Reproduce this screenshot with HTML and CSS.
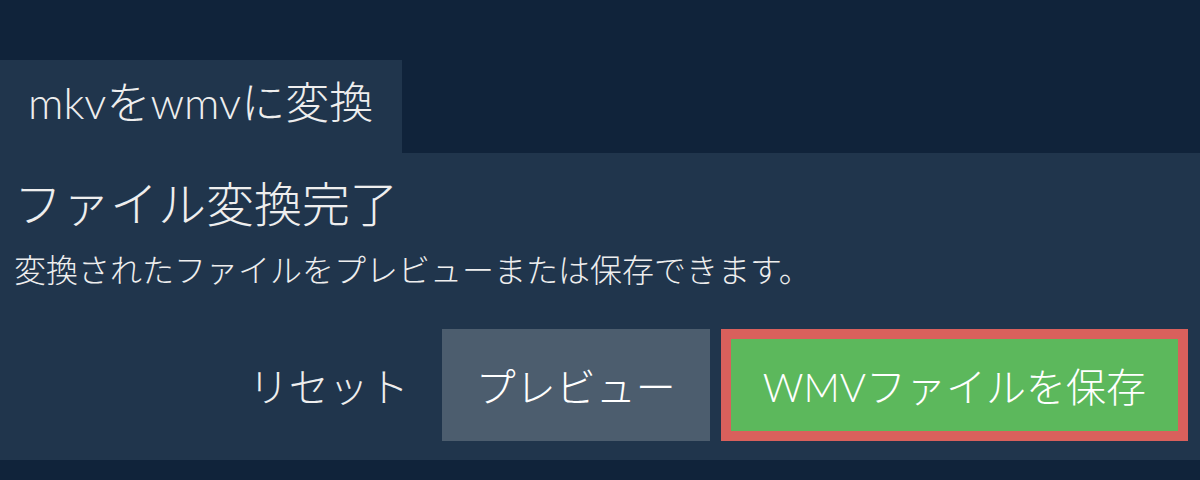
FILE: index.html
```html
<!DOCTYPE html>
<html lang="ja">
<head>
    <meta charset="UTF-8">
    <meta name="viewport" content="width=device-width, initial-scale=1.0">
    <title>mkvをwmvに変換</title>
    <link rel="stylesheet" href="styles.css">
</head>
<body>
    <div class="tabs">
        <div class="tab">mkvをwmvに変換</div>
    </div>
    <div class="panel">
        <h1>ファイル変換完了</h1>
        <p class="desc">変換されたファイルをプレビューまたは保存できます。</p>
        <div class="actions">
            <button class="btn btn-reset">リセット</button>
            <button class="btn btn-preview">プレビュー</button>
            <button class="btn btn-save">WMVファイルを保存</button>
        </div>
    </div>
</body>
</html>
```

FILE: styles.css
```css
body {
    font-family: "Lato", "Noto Sans CJK JP", sans-serif;
    font-weight: 300;
    background-color: #10233a;
    color: #eeeeee;
    margin: 0;
    padding: 60px 0 0;
}

.tabs {
    display: flex;
}

.tab {
    width: 402px;
    height: 93px;
    box-sizing: border-box;
    padding: 0 28px 14px;
    display: flex;
    align-items: center;
    font-size: 44px;
    background-color: #20354c;
}

.panel {
    background-color: #20354c;
    padding: 18px 12px 19px 14px;
}

.panel h1 {
    font-size: 48px;
    font-weight: 300;
    margin: 0;
    line-height: 66px;
}

.desc {
    font-size: 32px;
    margin: 10px 0 0;
    line-height: 46px;
}

.actions {
    display: flex;
    justify-content: flex-end;
    gap: 11px;
    margin-top: 36px;
}

.btn {
    font-family: inherit;
    font-weight: 300;
    font-size: 40px;
    color: #ffffff;
    border: none;
    height: 112px;
    padding: 0 34px;
    cursor: pointer;
}

.btn-reset {
    background: transparent;
    color: #eeeeee;
    padding-right: 22px;
}

.btn-preview {
    background-color: #4c5d6e;
}

.btn-save {
    background-color: #5cb85c;
    border: 10px solid #d9605c;
    height: 112px;
    padding: 0 32px;
}
```
